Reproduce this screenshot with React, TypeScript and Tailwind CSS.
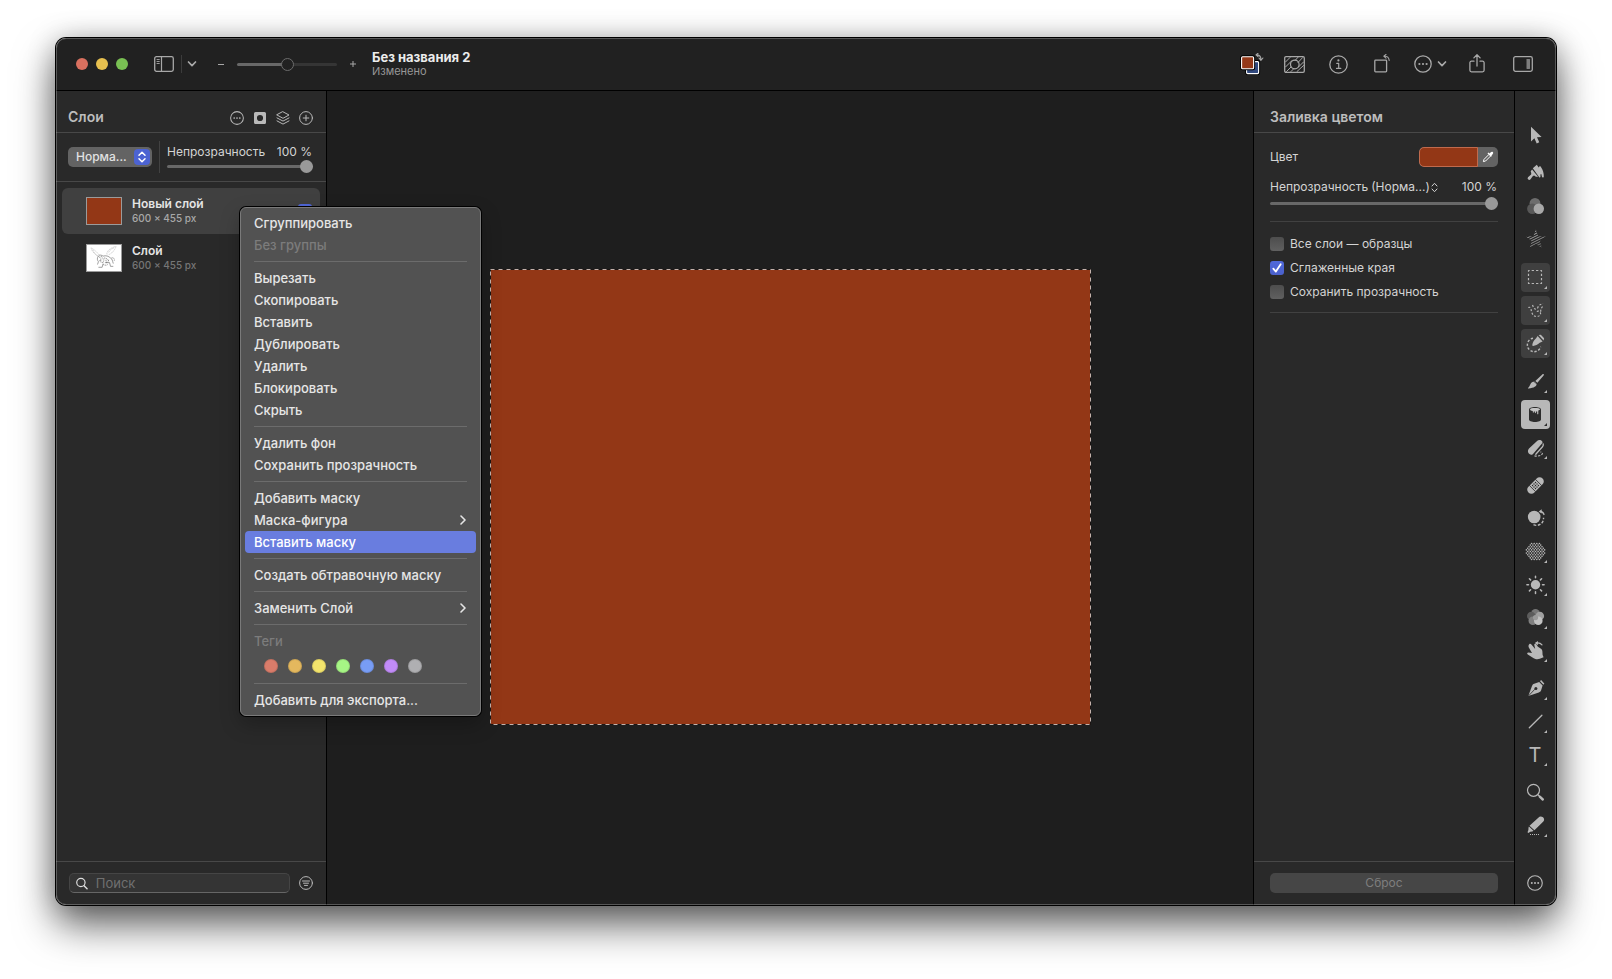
import React, { useState } from "react";
import { clsx } from "clsx";

type IconProps = { className?: string; children: React.ReactNode };

const ToolSvg = ({ className, children }: IconProps) => (
  <svg
    viewBox="0 0 29 29"
    className={clsx("h-[29px] w-[29px]", className)}
    fill="currentColor"
    aria-hidden="true"
  >
    {children}
  </svg>
);

const line = {
  fill: "none",
  stroke: "currentColor",
  strokeLinecap: "round" as const,
  strokeLinejoin: "round" as const,
};

type Tool = {
  name: string;
  icon: React.ReactNode;
  more?: boolean;
  boxed?: boolean;
};

const DOTS = Array.from({ length: 13 }, (_, row) =>
  Array.from({ length: 9 }, (_, col) => ({
    x: 14.5 + (col - 4) * 2.6 + (row % 2 ? 1.3 : 0),
    y: 14.5 + (row - 6) * 1.6,
  })),
)
  .flat()
  .filter((p) => Math.hypot(p.x - 14.5, p.y - 14.5) < 9.6);

const TOOL_GROUPS: Tool[][] = [
  [
    {
      name: "Расположение",
      icon: (
        <path d="M10 5.8V20.4l3.4-3.1 2.3 5.2 2.6-1.2-2.3-5 4.6-.3z" />
      ),
    },
  ],
  [
    {
      name: "Стиль",
      icon: (
        <>
          <path d="m11.800 9.300 4-3.500 1.900 2.700 1.300-1.800 1.400 2c1.700 2.800 2.500 5.700 2.400 8.700 0 1.300-1.700 1.400-1.900.1l-.6-2.600-.9.500.1 2.100c0 1.200-1.500 1.300-1.800.1z" />
          <path d="m11.100 10.500 6 7.300-2.200 0-1.800-1.200-1.200.4-2.400 3.300a1.600 1.600 0 0 1-2.500-2l3.100-2.700.2-1.300-.6-2z" />
        </>
      ),
    },
    {
      name: "Коррекция цвета",
      icon: (
        <>
          <circle cx="14" cy="11.300" r="5.400" fill="#6d6d6d" />
          <circle cx="11.300" cy="16.700" r="5.200" fill="#585858" />
          <circle cx="17.800" cy="16.800" r="5.200" fill="#a8a8a8" />
        </>
      ),
    },
    {
      name: "Эффекты",
      icon: (
        <>
          <clipPath id="star">
            <path d="m14.800 4.500 2.600 6.700 7.400.3-5.800 4.500 2.100 7.200-6.300-4.100-6.200 4.100 2.100-7.200L4.900 11.500l7.400-.3z" />
          </clipPath>
          <g clipPath="url(#star)" stroke="currentColor" strokeWidth="1.100">
            {[0, 1, 2, 3, 4, 5, 6, 7, 8, 9, 10].map((i) => (
              <path
                key={i}
                d={`M4 ${9 + i * 2.5}L26 ${-2 + i * 2.5}`}
                opacity={1 - i * 0.06}
              />
            ))}
          </g>
        </>
      ),
    },
  ],
  [
    {
      name: "Прямоугольная область",
      more: true,
      boxed: true,
      icon: (
        <rect
          x="7.500"
          y="7.500"
          width="13"
          height="13"
          {...line}
          strokeLinecap="butt"
          strokeWidth="1.200"
          strokeDasharray="2.300 2.033"
          strokeDashoffset="1.150"
        />
      ),
    },
    {
      name: "Произвольное выделение",
      more: true,
      boxed: true,
      icon: (
        <path
          d="M7.300 11.500c1.200-.6 2.400-.1 2.700 1.500.5 3.500 1.800 7.500 5.500 7.500 3.500 0 5-2.500 3.500-4.500-1.200-1.500-3.500-1-3.500.5M11.500 9c.8 2 1.500 4.500 4 4 1.500-.5 1.500-3.500 3.500-4.200 1-.4 2-.8 3-1.300M21.500 10.500c-1 1.500-2 3-1.800 5.500"
          {...line}
          strokeLinecap="butt"
          strokeWidth="1.200"
          strokeDasharray="2 1.700"
        />
      ),
    },
    {
      name: "Быстрое выделение",
      more: true,
      boxed: true,
      icon: (
        <>
          <path
            d="M12 9.200a6.800 6.800 0 1 0 7.700 8.600"
            {...line}
            strokeLinecap="butt"
            strokeWidth="1.400"
            strokeDasharray="2.300 1.700"
          />
          <path d="m16.600 7 5 5.600-2.900 1.200c-2 1.900-4.300 2.900-6.600 3.100-.6 0-.9-.3-.8-.9.400-2.700 1.700-5 3.800-6.700z" />
          <path d="m17.600 6 2.200-.2 3.300 3.500-.5 2.300z" />
        </>
      ),
    },
  ],
  [
    {
      name: "Кисть",
      more: true,
      icon: (
        <>
          <path d="M22.600 7.100c.4.300.4.900 0 1.400l-6.200 7.300-2.100-1.900 7-6.500c.4-.4.900-.6 1.300-.3z" />
          <path d="m13.600 14.600 2.200 2c-.2 2.800-2.600 4.400-8.300 5-.5.100-.7-.4-.4-.7 1.400-1.200 1.500-2.100 2.300-3.700.8-1.700 2.300-2.700 4.200-2.600z" />
          <path d="m12.600 14.200 4 3.400" stroke="#2a2a2a" strokeWidth=".8" />
        </>
      ),
    },
    {
      name: "Заливка",
      more: true,
      icon: (
        <>
          <path
            d="M8 9.400C8 8 10.700 7 14 7s6 1 6 2.400v10.200c0 1.500-2.700 2.500-6 2.500s-6-1-6-2.500z"
            fill="#2c2c2c"
          />
          <path
            d="M9 9.300c0-.8 2.300-1.300 5-1.300s5 .5 5 1.300c0 .7-.8 1-1.700 1.200v3.300c0 .7-1.100.7-1.100 0V11.500h-1.300v1.200c0 .6-1 .6-1 0v-1.200h-1.100v.8c0 .6-1 .6-1 0v-1.200C10 10.800 9 10.200 9 9.300z"
            fill="#c4c4c4"
          />
        </>
      ),
    },
    {
      name: "Ластик",
      more: true,
      icon: (
        <>
          <path d="M15.800 8.200c1.700-1.900 4.800-1.300 5.600.5.300.7.100 1.300-.4 1.900l-9 10.300c-1.300 1.300-3.100 1-4.200-.3-1.300-1.600-1.100-3.500.2-5z" />
          <path
            d="M22.200 10.800c.3 1.200 0 2.100-.7 3l-6.700 7.500"
            {...line}
            strokeWidth="1.300"
          />
          <path
            d="M13.500 22.800c3 .6 6.500.2 7.700-1.800.5-1.200-.5-2-1.700-1.800"
            {...line}
            strokeWidth="1.200"
            strokeLinecap="butt"
            strokeDasharray="2.200 1.300"
          />
        </>
      ),
    },
  ],
  [
    {
      name: "Восстановление",
      icon: (
        <g transform="rotate(-45 14.500 14.500)">
          <rect x="4.500" y="10.300" width="20" height="8.400" rx="4.200" />
          <path d="M10.200 10v9M18.800 10v9" stroke="#2a2a2a" strokeWidth=".8" />
          <g fill="#2a2a2a">
            {[12.4, 14.5, 16.6].map((x) =>
              [12.4, 14.5, 16.6].map((y) => (
                <circle key={`${x}-${y}`} cx={x} cy={y} r=".7" />
              )),
            )}
          </g>
        </g>
      ),
    },
    {
      name: "Клонирование",
      icon: (
        <>
          <circle cx="13.200" cy="13" r="6.300" />
          <path
            d="M12.500 20.700c5 2.300 10.500-1.500 10-7"
            {...line}
            strokeLinecap="butt"
            strokeWidth="1.400"
            strokeDasharray="2.800 1.600"
          />
          <path d="M19.400 7.500c1.600.1 3 1.200 3.600 3" {...line} strokeWidth="1.300" />
          <path d="m17.700 7.400 3-2.200v4.400z" />
        </>
      ),
    },
    {
      name: "Размытие",
      more: true,
      icon: (
        <>
          {DOTS.map((p) => (
            <circle key={`${p.x}-${p.y}`} cx={p.x} cy={p.y} r=".82" />
          ))}
        </>
      ),
    },
    {
      name: "Осветление",
      more: true,
      icon: (
        <>
          <circle cx="14.500" cy="14.800" r="4.700" />
          <path
            d="M14.500 6.200v1.600M14.500 21.800v1.600M5.900 14.800h1.600M21.500 14.800h1.600M8.400 8.700l1.200 1.200M19.400 19.700l1.200 1.200M8.400 20.900l1.200-1.200M19.400 9.900l1.200-1.200"
            {...line}
            strokeWidth="1.500"
          />
        </>
      ),
    },
    {
      name: "Насыщенность",
      more: true,
      icon: (
        <>
          <circle cx="14.500" cy="10.300" r="4.300" fill="#777" />
          <circle cx="10.300" cy="13" r="4.300" fill="#5c5c5c" />
          <circle cx="11.800" cy="17.800" r="4.300" fill="#808080" />
          <circle cx="18.800" cy="13" r="4.300" fill="#a0a0a0" />
          <circle cx="17.300" cy="17.800" r="4.300" fill="#c2c2c2" />
          <circle cx="14.500" cy="14.600" r="2.600" fill="#9a9a9a" />
        </>
      ),
    },
    {
      name: "Деформация",
      more: true,
      icon: (
        <>
          <path d="M8.200 8.300c.7-.8 1.700-.5 2.200.2l3.800 4.600-.9-4c-.2-1.300 1.500-1.700 2.100-.6l1.500 2.300 3.100 2c.9.700 1.300 1.500 1.400 2.600l.2 3.600 1 2.200-3.800 1.500c-2.700.9-4.900.4-7.300-1.300l-4.700-2.900c-1.200-.9-.6-2.100.7-2l3.500.5-3.200-5.600c-.5-1-.4-2.300.4-3.100z" />
          <path d="M15.500 7c2.300-.3 4.200.3 5.500 1.900" {...line} strokeWidth="1.200" />
          <path d="m13.800 7 3.200-2-.2 4.200z" />
        </>
      ),
    },
  ],
  [
    {
      name: "Перо",
      more: true,
      icon: (
        <>
          <path d="m18.200 8 3.400 3.400-1.500 4.800c-.4 1.200-1.200 1.800-2.300 2.200L7.300 22.100 11 11.900c.4-1 1.100-1.800 2.200-2.200z" />
          <path d="m19 7.300 1.100-1.200 3.200 3.300-.9 1.400z" />
          <path d="m7.500 21.900 6.400-6.700" stroke="#2a2a2a" strokeWidth=".8" />
          <circle cx="14.900" cy="14.400" r="1.500" fill="#2a2a2a" />
        </>
      ),
    },
    {
      name: "Линия",
      more: true,
      icon: <path d="M8.300 20.700 20.900 8.300" {...line} strokeWidth="1.300" />,
    },
    {
      name: "Текст",
      more: true,
      icon: (
        <text
          x="14"
          y="22"
          fontSize="20"
          textAnchor="middle"
          fontFamily="Inter, sans-serif"
        >
          T
        </text>
      ),
    },
  ],
  [
    {
      name: "Масштаб",
      icon: (
        <>
          <circle cx="12.500" cy="12.300" r="6" {...line} strokeWidth="1.200" />
          <path d="m17 16.800 1.800 1.700" {...line} strokeWidth="1.200" />
          <path d="m18.800 18.700 3 2.800" {...line} strokeWidth="2.400" />
        </>
      ),
    },
    {
      name: "Фрагмент",
      more: true,
      icon: (
        <>
          <path d="M17.600 6.400c1.600-1.700 5.600-.5 5.500 2.200 0 1-.4 1.500-1 2.100l-8.700 8.600-4.900-4.500z" />
          <path d="m7.900 15.600 4.600 4.200-1.200.6-2 .3-1.900 1.400-.9-.8.900-2.400.100-2.100z" />
          <path
            d="M9 23.500h10"
            stroke="currentColor"
            strokeWidth="1"
            strokeDasharray="1 1"
          />
        </>
      ),
    },
  ],
];

const EllipsisCircle = ({ className }: { className?: string }) => (
  <svg viewBox="0 0 18 18" className={className} aria-hidden="true">
    <circle cx="9" cy="9" r="8.200" {...line} strokeWidth="1.300" />
    <g fill="currentColor">
      <circle cx="5.400" cy="9" r="1.100" />
      <circle cx="9" cy="9" r="1.100" />
      <circle cx="12.600" cy="9" r="1.100" />
    </g>
  </svg>
);

const ChevronDown = () => (
  <svg viewBox="0 0 10 8" className="h-2 w-2.5" aria-hidden="true">
    <path d="m1.500 2 3.500 3.700L8.500 2" {...line} strokeWidth="1.700" />
  </svg>
);

const MoreCorner = () => (
  <svg
    viewBox="0 0 3 3"
    className="absolute right-[3px] bottom-[3px] h-[3px] w-[3px]"
    fill="currentColor"
    aria-hidden="true"
  >
    <path d="M3 0v3H0z" />
  </svg>
);

const FULL_SLIDER =
  "block h-[13px] appearance-none bg-transparent [&::-webkit-slider-runnable-track]:h-[3px] [&::-webkit-slider-runnable-track]:rounded-full [&::-webkit-slider-runnable-track]:bg-[#686868] [&::-webkit-slider-thumb]:-mt-[5px] [&::-webkit-slider-thumb]:h-[13px] [&::-webkit-slider-thumb]:w-[13px] [&::-webkit-slider-thumb]:appearance-none [&::-webkit-slider-thumb]:rounded-full [&::-webkit-slider-thumb]:bg-[#999999]";

const Toolbar = () => (
  <header className="flex h-[53px] shrink-0 items-center border-b border-black bg-[#212121] pr-[23px] pl-5 text-[#a8a8a8]">
    <div className="flex gap-2">
      <button aria-label="Закрыть" className="h-3 w-3 rounded-full bg-[#d9705f]" />
      <button aria-label="Свернуть" className="h-3 w-3 rounded-full bg-[#e7c04f]" />
      <button aria-label="Развернуть" className="h-3 w-3 rounded-full bg-[#79c053]" />
    </div>
    <button aria-label="Боковая панель" className="ml-[26px]">
      <svg viewBox="0 0 20 16" className="h-4 w-5" aria-hidden="true">
        <rect x=".7" y=".7" width="18.600" height="14.600" rx="1.800" {...line} strokeWidth="1.300" />
        <path d="M7.500 1v14" {...line} strokeWidth="1.200" />
        <path d="M3 3.500h2.300M3 5.500h2.300M3 7.500h2.300" {...line} strokeWidth=".9" />
      </svg>
    </button>
    <div className="ml-[7px] h-[18px] w-px bg-[#3c3c3c]" />
    <button aria-label="Вид" className="ml-[5px]">
      <ChevronDown />
    </button>
    <button aria-label="Уменьшить" className="ml-5 grid h-4 w-2 place-items-center">
      <span className="h-px w-1.5 bg-current" />
    </button>
    <input
      type="range"
      aria-label="Масштаб"
      defaultValue={50}
      className="ml-3 block h-[13px] w-[100px] appearance-none bg-transparent [&::-webkit-slider-runnable-track]:h-[3px] [&::-webkit-slider-runnable-track]:rounded-full [&::-webkit-slider-runnable-track]:bg-[linear-gradient(90deg,#686868_50%,#353535_50%)] [&::-webkit-slider-thumb]:-mt-[5px] [&::-webkit-slider-thumb]:h-[13px] [&::-webkit-slider-thumb]:w-[13px] [&::-webkit-slider-thumb]:appearance-none [&::-webkit-slider-thumb]:rounded-full [&::-webkit-slider-thumb]:border [&::-webkit-slider-thumb]:border-[#6c6c6c] [&::-webkit-slider-thumb]:bg-[#212121]"
    />
    <button aria-label="Увеличить" className="ml-3 grid h-4 w-2 place-items-center">
      <svg viewBox="0 0 6 6" className="h-1.5 w-1.5" aria-hidden="true">
        <path d="M3 0v6M0 3h6" stroke="currentColor" />
      </svg>
    </button>
    <div className="ml-[15px] pb-px">
      <h1 className="text-[13px] leading-4 font-bold text-[#ececec]">Без названия 2</h1>
      <p className="text-[11px] leading-[13px] text-[#979797]">Изменено</p>
    </div>

    <div className="ml-auto flex items-center">
      <button aria-label="Цвета">
        <svg viewBox="0 0 24 22" className="h-[22px] w-6" aria-hidden="true">
          <rect x="6.600" y="8.600" width="12" height="12" rx="1" fill="#31497f" stroke="#000" strokeWidth="3" />
          <rect x="6.600" y="8.600" width="12" height="12" rx="1" fill="#31497f" stroke="#fff" strokeWidth="1.100" />
          <rect x="1.600" y="3.700" width="12" height="12" rx="1" fill="#943818" stroke="#000" strokeWidth="3" />
          <rect x="1.600" y="3.700" width="12" height="12" rx="1" fill="#943818" stroke="#fff" strokeWidth="1.100" />
          <path d="M16.500 1.900c3 0 4.400 1.400 4.400 4.200M18 .3l-2 1.600L18 3.500M19 5l1.900 2.400L22.900 5" {...line} strokeWidth="1.100" />
        </svg>
      </button>
      <button aria-label="Прозрачность" className="ml-5">
        <svg viewBox="0 0 21 17" className="h-[17px] w-[21px]" aria-hidden="true">
          <rect x=".7" y=".7" width="19.600" height="15.600" rx="1.300" {...line} strokeWidth="1.300" />
          <circle cx="10.800" cy="8.500" r="4.300" {...line} strokeWidth="1.200" />
          <path d="M1.500 6 6 1.500M1.500 11 8 4.500M2.500 15.500l4.500-4.500M7 15.500l3-3M11 4.500l3-3.200M14 6.500l4.500-4.800M14.500 11 19.500 6M13 15.500l6.500-6" {...line} strokeWidth="1" />
        </svg>
      </button>
      <button aria-label="Информация" className="ml-6">
        <svg viewBox="0 0 19 19" className="h-[19px] w-[19px]" aria-hidden="true">
          <circle cx="9.500" cy="9.500" r="8.700" {...line} strokeWidth="1.300" />
          <circle cx="9.400" cy="5.400" r="1.100" fill="currentColor" />
          <path d="M7.700 8.300h2v5M7.500 13.400h4.300" {...line} strokeWidth="1.200" />
        </svg>
      </button>
      <button aria-label="Повернуть" className="ml-[26px]">
        <svg viewBox="0 0 18 20" className="h-5 w-[18px]" aria-hidden="true">
          <rect x=".8" y="6.200" width="11.800" height="11.600" rx=".8" {...line} strokeWidth="1.300" />
          <path d="M10.200 2c3 .1 4.800 1.700 5 4.500M12 .5 9.800 2.200 12 4.200" {...line} strokeWidth="1.100" />
        </svg>
      </button>
      <button aria-label="Еще" className="ml-[22px] flex items-center gap-[5px]">
        <EllipsisCircle className="h-[18px] w-[18px]" />
        <ChevronDown />
      </button>
      <button aria-label="Поделиться" className="ml-[22px]">
        <svg viewBox="0 0 16 20" className="h-5 w-4" aria-hidden="true">
          <path d="M5 7.200H2.500c-.9 0-1.600.6-1.600 1.500v7.600c0 .9.700 1.500 1.600 1.500h11c.9 0 1.600-.6 1.600-1.500V8.700c0-.9-.7-1.500-1.600-1.500H11M8 12V.9M4.900 3.900 8 .8l3.100 3.100" {...line} strokeWidth="1.300" />
        </svg>
      </button>
      <button aria-label="Инструменты" className="ml-7">
        <svg viewBox="0 0 20 16" className="h-4 w-5" aria-hidden="true">
          <rect x=".7" y=".7" width="18.600" height="14.600" rx="1.800" {...line} strokeWidth="1.300" />
          <rect x="13.500" y="3" width="3.500" height="10" rx=".4" fill="#7e7e7e" />
        </svg>
      </button>
    </div>
  </header>
);

const SketchThumb = () => (
  <svg viewBox="0 0 36 28" className="h-7 w-9 border border-[#9b9b9b] bg-white" aria-hidden="true">
    <g fill="none" stroke="#a8a8a8" strokeWidth=".5">
      <path d="M14 13C12 9 8 5 4 3c1 4 4 7 9 10M6 5c1 3 3 6 6 7M21 10c0-4 4-7 10-8.500-1 3-2 4-3 5 0 1-1 2-2 2-1 1-2 2-4 2M23 8c1-3 4-4 6-5" strokeDasharray="2 .7" />
    </g>
    <g fill="none" stroke="#6d6d6d" strokeWidth=".7">
      <path d="M12 12c1-2 4-1 5 0 3-1 6 0 8 2 2 1 2 3 3 6M12 12c-2 2-1 5 0 6l-1 3M17 20l-1 4h-4M19 19h5l1 4h3" />
      <path d="M13 13l2 2-2 2 3-1M15 12l3 4M18 14c2 0 4 1 5 3M14 18l3 1 1-3M20 16l1 4M23 16l-1 3M17 21c2 1 4 1 5 0M26 14c2-1 4 1 3 3" strokeDasharray="1.500 .6" />
    </g>
  </svg>
);

const LAYERS = [
  { name: "Новый слой", size: "600 × 455 px", thumb: "fill" },
  { name: "Слой", size: "600 × 455 px", thumb: "sketch" },
];

const LayersPanel = () => (
  <aside className="flex w-[271px] shrink-0 flex-col border-r border-black bg-[#292929]">
    <div className="flex h-[42px] items-center border-b border-[#484848] pt-3 pr-[13px] pl-3">
      <h2 className="pb-0.5 text-sm leading-4 font-semibold text-[#bdbdbd]">Слои</h2>
      <div className="ml-auto flex items-center gap-[9px] text-[#b9b9b9]">
        <button aria-label="Действия">
          <EllipsisCircle className="h-3.5 w-3.5" />
        </button>
        <button aria-label="Маска">
          <svg viewBox="0 0 14 14" className="h-3.5 w-3.5" aria-hidden="true">
            <path fillRule="evenodd" fill="currentColor" d="M2.500 1h9A1.500 1.500 0 0 1 13 2.500v9a1.500 1.500 0 0 1-1.500 1.500h-9A1.500 1.500 0 0 1 1 11.500v-9A1.500 1.500 0 0 1 2.500 1zM7 3.900a3.100 3.100 0 1 0 0 6.200 3.100 3.100 0 0 0 0-6.200z" />
          </svg>
        </button>
        <button aria-label="Группа">
          <svg viewBox="0 0 14 14" className="h-3.5 w-3.5" aria-hidden="true">
            <path d="M7 .8 13 4 7 7.300 1 4zM1 6.900l6 3.200 6-3.200M1 9.900l6 3.200 6-3.200" {...line} strokeWidth="1" />
          </svg>
        </button>
        <button aria-label="Добавить слой">
          <svg viewBox="0 0 14 14" className="h-3.5 w-3.5" aria-hidden="true">
            <circle cx="7" cy="7" r="6.400" {...line} strokeWidth="1" />
            <path d="M7 4.200v5.600M4.200 7h5.600" {...line} strokeWidth="1" />
          </svg>
        </button>
      </div>
    </div>

    <div className="flex h-[49px] items-center border-b border-[#484848] pr-[13px] pl-3">
      <div className="grid h-5 w-[84px] shrink-0 items-center rounded-[5px] bg-[#636363]">
        <select
          aria-label="Режим наложения"
          className="h-5 w-full appearance-none bg-transparent pl-2 text-[12px] leading-5 font-medium text-[#e2e2e2] [grid-area:1/1]"
        >
          <option>Норма...</option>
        </select>
        <svg
          viewBox="0 0 16 16"
          className="pointer-events-none mr-0.5 h-4 w-4 justify-self-end rounded bg-[#4c63d2] text-white [grid-area:1/1]"
          aria-hidden="true"
        >
          <path d="M5 6.300 8 3.300l3 3M5 9.700l3 3 3-3" {...line} strokeWidth="1.500" />
        </svg>
      </div>
      <div className="ml-[7px] h-8 w-px bg-[#424242]" />
      <div className="ml-[7px] min-w-0 flex-1 pt-0.5">
        <label
          htmlFor="layer-opacity"
          className="flex justify-between pr-px text-[12px] leading-4 text-[#d4d4d4]"
        >
          <span>Непрозрачность</span>
          <span>100 %</span>
        </label>
        <input id="layer-opacity" type="range" defaultValue={100} className={clsx(FULL_SLIDER, "w-full")} />
      </div>
    </div>

    <ul className="flex flex-1 flex-col gap-px px-1.5 pt-1.5">
      {LAYERS.map((layer, index) => (
        <li
          key={layer.name}
          className={clsx(
            "flex h-[46px] items-center rounded-md pr-2 pl-6",
            index === 0 && "bg-[#404040]",
          )}
        >
          {layer.thumb === "fill" ? (
            <div className="h-7 w-9 border border-[#9b9b9b] bg-[#933716]" />
          ) : (
            <SketchThumb />
          )}
          <div className="ml-2.5 pb-0.5">
            <p className="text-[12px] leading-4 font-semibold text-[#e4e4e4]">{layer.name}</p>
            <p className={clsx("text-[10px] leading-[13px] font-medium", index === 0 ? "text-[#a8a8a8]" : "text-[#767676]")}>
              {layer.size}
            </p>
          </div>
          {index === 0 && (
            <input
              type="checkbox"
              aria-label="Видимость слоя"
              defaultChecked
              className="ml-auto h-3.5 w-3.5 appearance-none rounded-[3px] bg-[#5067d8]"
            />
          )}
        </li>
      ))}
    </ul>

    <div className="flex h-11 items-center border-t border-[#484848] px-[13px] pb-px">
      <div className="flex h-5 flex-1 items-center rounded-[5px] border border-[#454545] border-b-[#666666] bg-[#343434] pl-1.5">
        <svg viewBox="0 0 13 13" className="h-[13px] w-[13px] text-[#dedede]" aria-hidden="true">
          <circle cx="5.400" cy="5.400" r="4.600" {...line} strokeWidth="1.300" />
          <path d="m8.900 8.900 3.300 3.300" {...line} strokeWidth="1.500" />
        </svg>
        <input
          type="search"
          aria-label="Поиск"
          placeholder="Поиск"
          className="ml-2 h-4 w-full min-w-0 bg-transparent text-[13px] leading-4 text-[#dddddd] outline-none placeholder:text-[#707070]"
        />
      </div>
      <button aria-label="Фильтр" className="ml-[9px] text-[#b9b9b9]">
        <svg viewBox="0 0 14 14" className="h-3.5 w-3.5" aria-hidden="true">
          <circle cx="7" cy="7" r="6.400" {...line} strokeWidth="1" />
          <path d="M3.500 5h7M4.500 7.200h5M5.500 9.400h3" {...line} strokeWidth="1" />
        </svg>
      </button>
    </div>
  </aside>
);

const CanvasArea = () => (
  <main className="flex min-w-0 flex-1 items-center justify-center bg-[#1e1e1e] pb-0.5 pl-px">
    <svg viewBox="0 0 601 456" className="w-[601px] shrink-0" role="img" aria-label="Холст">
      <rect width="601" height="456" fill="#933716" />
      <rect x=".5" y=".5" width="600" height="455" fill="none" stroke="#1b1412" />
      <rect x=".5" y=".5" width="600" height="455" fill="none" stroke="#c4b2ac" strokeDasharray="4 4" />
    </svg>
  </main>
);

const Check = ({ label, initial }: { label: string; initial: boolean }) => {
  const [checked, setChecked] = useState(initial);
  return (
    <label className="flex h-6 items-center gap-1.5 text-[12px] leading-4 text-[#d4d4d4]">
      <span className="grid">
        <input
          type="checkbox"
          checked={checked}
          onChange={(event) => setChecked(event.target.checked)}
          className="h-3.5 w-3.5 appearance-none rounded-[3px] bg-linear-to-b from-[#4d4d4d] to-[#606060] [grid-area:1/1] checked:from-[#5069da] checked:to-[#4a60cc]"
        />
        {checked && (
          <svg viewBox="0 0 14 14" className="pointer-events-none h-3.5 w-3.5 text-white [grid-area:1/1]" aria-hidden="true">
            <path d="m3.300 7.600 2.600 3 4.800-7.300" {...line} strokeWidth="1.800" />
          </svg>
        )}
      </span>
      {label}
    </label>
  );
};

const FillPanel = () => (
  <aside className="flex w-[261px] shrink-0 flex-col border-l border-black bg-[#292929] text-[12px] leading-4 text-[#d4d4d4]">
    <h2 className="flex h-[42px] items-center border-b border-[#484848] px-4 pt-2.5 text-sm leading-4 font-semibold text-[#bdbdbd]">
      Заливка цветом
    </h2>
    <div className="flex flex-1 flex-col px-4 pt-3.5">
      <div className="flex h-5 items-center justify-between">
        <span>Цвет</span>
        <div className="flex h-5 w-[79px] overflow-hidden rounded-[5px] bg-[#636363]">
          <button aria-label="Цвет" className="flex-1 rounded-l-[5px] border border-[#c06a4d] bg-[#933716]" />
          <button aria-label="Пипетка" className="grid w-5 place-items-center text-white">
            <svg viewBox="0 0 12 12" className="h-3 w-3" aria-hidden="true">
              <path d="M6.700 3.700 2 8.400l-.6 2.200 2.200-.6 4.700-4.700" {...line} strokeWidth="1" />
              <path d="M7.600 2.600c1-1.300 2-2.400 3.200-1.500 1 1 .1 2.200-1.300 3.300l.4.500-1 .9-3.400-3.300.9-.9z" fill="currentColor" />
            </svg>
          </button>
        </div>
      </div>
      <div className="mt-3 flex h-4 items-center">
        <label htmlFor="fill-opacity">Непрозрачность</label>
        <select
          aria-label="Режим"
          className="ml-[3px] field-sizing-content h-4 appearance-none bg-transparent text-[12px] leading-4"
        >
          <option>(Норма...)</option>
        </select>
        <svg viewBox="0 0 7 11" className="ml-px h-[11px] w-[7px]" aria-hidden="true">
          <path d="M1 4 3.500 1.300 6 4M1 7l2.500 2.700L6 7" {...line} strokeWidth="1" />
        </svg>
        <span className="ml-auto pr-px">100 %</span>
      </div>
      <input id="fill-opacity" type="range" defaultValue={100} className={clsx(FULL_SLIDER, "mt-0.5 w-full")} />
      <hr className="mt-[11px] border-[#414141]" />
      <div className="mt-2.5">
        <Check label="Все слои — образцы" initial={false} />
        <Check label="Сглаженные края" initial />
        <Check label="Сохранить прозрачность" initial={false} />
      </div>
      <hr className="mt-2 border-[#414141]" />
    </div>
    <div className="flex h-11 items-center border-t border-[#484848] px-4 pb-px">
      <button disabled className="h-5 w-full rounded-[5px] bg-[#464646] text-[12px] leading-5 text-[#7e7e7e]">
        Сброс
      </button>
    </div>
  </aside>
);

const ToolStrip = () => {
  const [active, setActive] = useState("Заливка");
  return (
    <nav aria-label="Инструменты" className="flex w-[42px] shrink-0 flex-col items-center border-l border-black bg-[#292929] pt-[30px] pr-px pb-2 text-[#b8b8b8]">
      <div className="flex flex-col gap-[9px]">
        {TOOL_GROUPS.map((group) => (
          <div key={group[0].name} className="flex flex-col gap-1">
            {group.map((tool) => (
              <button
                key={tool.name}
                aria-label={tool.name}
                onClick={() => setActive(tool.name)}
                className={clsx(
                  "relative h-[29px] w-[29px] rounded",
                  tool.boxed && "bg-[#3f3f3f]",
                  active === tool.name && "bg-[#b8b8b8] text-[#2c2c2c]",
                )}
              >
                <ToolSvg>{tool.icon}</ToolSvg>
                {tool.more && <MoreCorner />}
              </button>
            ))}
          </div>
        ))}
      </div>
      <button aria-label="Другие инструменты" className="mt-auto grid h-7 w-7 place-items-center">
        <EllipsisCircle className="h-4 w-4" />
      </button>
    </nav>
  );
};

type Entry = { label: string; disabled?: boolean; submenu?: boolean; active?: boolean };

const MENU: Entry[][] = [
  [{ label: "Сгруппировать" }, { label: "Без группы", disabled: true }],
  [
    { label: "Вырезать" },
    { label: "Скопировать" },
    { label: "Вставить" },
    { label: "Дублировать" },
    { label: "Удалить" },
    { label: "Блокировать" },
    { label: "Скрыть" },
  ],
  [{ label: "Удалить фон" }, { label: "Сохранить прозрачность" }],
  [
    { label: "Добавить маску" },
    { label: "Маска-фигура", submenu: true },
    { label: "Вставить маску", active: true },
  ],
  [{ label: "Создать обтравочную маску" }],
  [{ label: "Заменить Слой", submenu: true }],
];

const TAGS = [
  { name: "Красный", color: "bg-[#d97c6a]" },
  { name: "Оранжевый", color: "bg-[#e4b85e]" },
  { name: "Желтый", color: "bg-[#f3e46c]" },
  { name: "Зеленый", color: "bg-[#a6f585]" },
  { name: "Синий", color: "bg-[#789df5]" },
  { name: "Фиолетовый", color: "bg-[#c18bf7]" },
  { name: "Серый", color: "bg-[#afafb2]" },
];

const MenuItem = ({ label, disabled, submenu, active }: Entry) => (
  <button
    role="menuitem"
    disabled={disabled}
    className={clsx(
      "flex h-[22px] w-full items-center justify-between rounded px-[9px] text-left text-[13px] leading-4 font-medium",
      disabled ? "text-[#7c7c7c]" : "text-[#e6e6e6]",
      active && "bg-[#697ddf] text-white",
    )}
  >
    {label}
    {submenu && (
      <svg viewBox="0 0 8 10" className="h-2.5 w-2" aria-hidden="true">
        <path d="m2 1 4 4-4 4" {...line} strokeWidth="1.600" />
      </svg>
    )}
  </button>
);

const Separator = () => <hr className="mx-[9px] my-[5px] border-[#6c6c6c]" />;

const ContextMenu = () => (
  <div
    role="menu"
    className="absolute top-[169px] left-[184px] w-[241px] rounded-md border border-[#7a7a7a] bg-[#525252] p-1 shadow-[0_0_0_1px_#000,0_8px_20px_rgba(0,0,0,0.25)]"
  >
    {MENU.map((group) => (
      <React.Fragment key={group[0].label}>
        {group.map((entry) => (
          <MenuItem key={entry.label} {...entry} />
        ))}
        <Separator />
      </React.Fragment>
    ))}
    <MenuItem label="Теги" disabled />
    <div className="flex h-[26px] items-center gap-2.5 pt-0.5 pl-[19px]">
      {TAGS.map((tag) => (
        <button key={tag.name} aria-label={tag.name} className={clsx("h-3.5 w-3.5 rounded-full border border-black/10", tag.color)} />
      ))}
    </div>
    <Separator />
    <MenuItem label="Добавить для экспорта..." />
  </div>
);

export default function App() {
  return (
    <div className="flex min-h-screen flex-col overflow-hidden bg-white px-14 pt-[38px] pb-[74px] font-['Inter','Noto_Sans',sans-serif]">
      <div className="relative flex flex-1 flex-col rounded-[10px] shadow-[0_0_0_1px_#000,0_20px_40px_rgba(0,0,0,0.6),0_2px_28px_rgba(0,0,0,0.25)]">
        <div className="flex flex-1 flex-col overflow-hidden rounded-[10px]">
          <Toolbar />
          <div className="flex flex-1">
            <LayersPanel />
            <CanvasArea />
            <FillPanel />
            <ToolStrip />
          </div>
        </div>
        <div className="pointer-events-none absolute inset-0 rounded-[10px] border border-white/25" />
        <ContextMenu />
      </div>
    </div>
  );
}
